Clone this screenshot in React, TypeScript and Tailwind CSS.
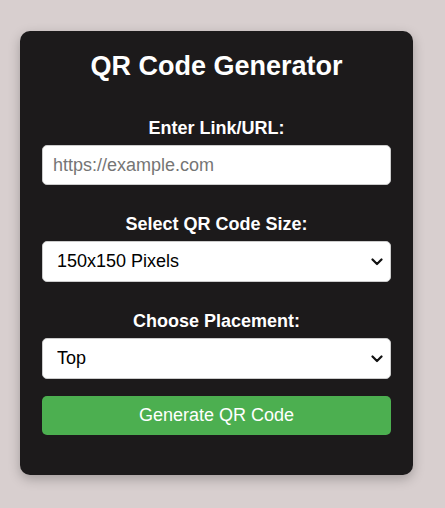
import React from "react";

const Chevron: React.FC = () => (
    <svg
        className="pointer-events-none absolute right-[8px] top-1/2 -translate-y-1/2"
        width="12"
        height="8"
        viewBox="0 0 12 8"
        fill="none"
    >
        <path d="M1.5 1.5 L6 6 L10.5 1.5" stroke="#111" strokeWidth="2.2" strokeLinecap="round" strokeLinejoin="round" />
    </svg>
);

const App: React.FC = () => {
    return (
        <div className="min-h-[508px] w-full bg-[#d8cfcf] pt-[31px] pl-5 font-['Liberation_Sans',Arial,sans-serif]">
            <div className="w-[393px] rounded-[10px] bg-[#1c1a1b] px-[22px] pt-[20px] pb-[40px] shadow-[0_4px_12px_rgba(0,0,0,0.25)]">
                <h2 className="text-center text-[27px] leading-[31px] font-bold text-white">QR Code Generator</h2>

                <label className="mt-[36px] mb-[6px] block text-center text-[18px] leading-[21px] font-bold text-white">
                    Enter Link/URL:
                </label>
                <input
                    type="text"
                    placeholder="https://example.com"
                    className="block h-[40px] w-full rounded-[5px] border border-[#ccc] bg-white px-[10px] text-[18px] text-black placeholder:text-[#757575] outline-none"
                />

                <label className="mt-[29px] mb-[6px] block text-center text-[18px] leading-[21px] font-bold text-white">
                    Select QR Code Size:
                </label>
                <div className="relative">
                    <select
                        defaultValue="150"
                        className="block h-[41px] w-full appearance-none rounded-[5px] border border-[#ccc] bg-white px-[14px] text-[18px] text-black outline-none"
                    >
                        <option value="150">150x150 Pixels</option>
                        <option value="200">200x200 Pixels</option>
                        <option value="300">300x300 Pixels</option>
                    </select>
                    <Chevron />
                </div>

                <label className="mt-[29px] mb-[6px] block text-center text-[18px] leading-[21px] font-bold text-white">
                    Choose Placement:
                </label>
                <div className="relative">
                    <select
                        defaultValue="top"
                        className="block h-[41px] w-full appearance-none rounded-[5px] border border-[#ccc] bg-white px-[14px] text-[18px] text-black outline-none"
                    >
                        <option value="top">Top</option>
                        <option value="bottom">Bottom</option>
                    </select>
                    <Chevron />
                </div>

                <button className="mt-[17px] block h-[39px] w-full rounded-[5px] bg-[#4caf50] text-[18px] text-white">
                    Generate QR Code
                </button>
            </div>
        </div>
    );
};

export default App;
